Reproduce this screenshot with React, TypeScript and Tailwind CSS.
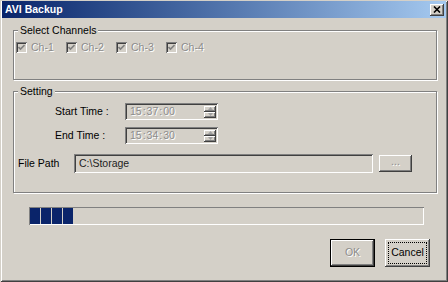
import React from "react";

const raised =
  "shadow-[inset_-1px_-1px_0_#404040,inset_1px_1px_0_#ffffff,inset_-2px_-2px_0_#808080,inset_2px_2px_0_#d4d0c8]";
const sunken =
  "shadow-[inset_1px_1px_0_#808080,inset_-1px_-1px_0_#ffffff,inset_2px_2px_0_#404040,inset_-2px_-2px_0_#d4d0c8]";
const disabledText = "text-[#8c8c8c] [text-shadow:1px_1px_0_#ffffff]";

function GroupBox({
  title,
  className,
  children,
}: {
  title: string;
  className: string;
  children: React.ReactNode;
}) {
  return (
    <div
      className={`relative border border-[#808080] shadow-[inset_1px_1px_0_#ffffff,1px_1px_0_#ffffff] ${className}`}
    >
      <span className="absolute -top-[8px] left-[4px] bg-[#d4d0c8] px-[2px] leading-[14px] text-black">
        {title}
      </span>
      {children}
    </div>
  );
}

function Check({ label }: { label: string }) {
  return (
    <div className="flex w-[50px] items-center gap-[4px]">
      <span
        className={`flex h-[11px] w-[11px] items-center justify-center bg-[#d4d0c8] ${sunken}`}
      >
        <svg width="7" height="7" viewBox="0 0 7 7">
          <path d="M0.5 3 L2.5 5 L6.5 1" stroke="#808080" strokeWidth="1.6" fill="none" />
        </svg>
      </span>
      <span className={`leading-[13px] ${disabledText}`}>{label}</span>
    </div>
  );
}

function TimeBox({ parts }: { parts: string[] }) {
  return (
    <div
      className={`flex h-[17px] w-[93px] items-center justify-between bg-[#d4d0c8] pl-[5px] pr-[2px] ${sunken}`}
    >
      <span className={`flex gap-[1px] leading-[13px] ${disabledText}`}>
        <span>{parts[0]}</span>
        <span>:</span>
        <span>{parts[1]}</span>
        <span>:</span>
        <span>{parts[2]}</span>
      </span>
      <span className="flex flex-col">
        <span className={`flex h-[6px] w-[12px] items-center justify-center ${raised}`}>
          <svg width="5" height="3" viewBox="0 0 5 3">
            <path d="M0 3 L2.5 0 L5 3 Z" fill="#a0a0a0" />
          </svg>
        </span>
        <span className={`flex h-[6px] w-[12px] items-center justify-center ${raised}`}>
          <svg width="5" height="3" viewBox="0 0 5 3">
            <path d="M0 0 L2.5 3 L5 0 Z" fill="#a0a0a0" />
          </svg>
        </span>
      </span>
    </div>
  );
}

export default function App() {
  return (
    <div
      className="flex h-[282px] w-[448px] flex-col bg-[#d4d0c8] p-[2px] pt-[1px] text-[10.5px] text-black shadow-[inset_1px_1px_0_#d4d0c8,inset_-1px_-1px_0_#404040,inset_2px_2px_0_#ffffff,inset_-2px_-2px_0_#808080]"
      style={{ fontFamily: '"Liberation Sans", Arial, sans-serif' }}
    >
      {/* title bar */}
      <div className="flex h-[17px] items-center justify-between bg-gradient-to-r from-[#0a246a] to-[#a6caf0] pl-[3px] pr-[2px]">
        <span className="font-bold leading-[13px] text-white">AVI Backup</span>
        <span className={`flex h-[12px] w-[14px] items-center justify-center bg-[#d4d0c8] ${raised}`}>
          <svg width="8" height="7" viewBox="0 0 8 7">
            <path d="M1 0.5 L7 6.5 M7 0.5 L1 6.5" stroke="#000" strokeWidth="1.6" />
          </svg>
        </span>
      </div>

      <div className="flex flex-col pl-[11px]">
        <GroupBox title="Select Channels" className="mt-[12px] h-[50px] w-[424px] pl-[2px] pt-[10px]">
          <div className="flex">
            <Check label="Ch-1" />
            <Check label="Ch-2" />
            <Check label="Ch-3" />
            <Check label="Ch-4" />
          </div>
        </GroupBox>

        <GroupBox title="Setting" className="mt-[11px] h-[102px] w-[424px] pt-[11px]">
          <div className="flex flex-col gap-[7px]">
            <div className="flex items-center">
              <span className="w-[111px] pl-[41px] leading-[13px]">Start Time :</span>
              <TimeBox parts={["15", "37", "00"]} />
            </div>
            <div className="flex items-center">
              <span className="w-[111px] pl-[41px] leading-[13px]">End Time :</span>
              <TimeBox parts={["15", "34", "30"]} />
            </div>
          </div>
          <div className="mt-[10px] flex items-center">
            <span className="w-[60px] pl-[4px] leading-[13px]">File Path</span>
            <div className={`flex h-[19px] w-[299px] items-center bg-[#d4d0c8] pl-[5px] ${sunken}`}>
              <span className="leading-[13px] text-[#222]">C:\Storage</span>
            </div>
            <span
              className={`ml-[6px] flex h-[17px] w-[33px] items-center justify-center pb-[3px] ${raised} ${disabledText}`}
            >
              ...
            </span>
          </div>
        </GroupBox>

        {/* progress */}
        <div className="ml-[16px] mt-[14px] flex h-[18px] w-[395px] gap-[1px] p-[1px] shadow-[inset_1px_1px_0_#808080,inset_-1px_-1px_0_#ffffff]">
          <span className="h-full w-[10px] bg-[#0a246a]" />
          <span className="h-full w-[10px] bg-[#0a246a]" />
          <span className="h-full w-[10px] bg-[#0a246a]" />
          <span className="h-full w-[10px] bg-[#0a246a]" />
        </div>

        <div className="mt-[14px] flex justify-end gap-[10px] pr-[16px]">
          <div className="h-[28px] w-[45px] border border-black">
            <div className={`flex h-full w-full items-center justify-center ${raised} ${disabledText}`}>
              OK
            </div>
          </div>
          <div className={`flex h-[28px] w-[45px] items-center justify-center p-[3px] ${raised}`}>
            <div className="flex h-full w-full items-center justify-center border border-dotted border-black">
              Cancel
            </div>
          </div>
        </div>
      </div>
    </div>
  );
}
